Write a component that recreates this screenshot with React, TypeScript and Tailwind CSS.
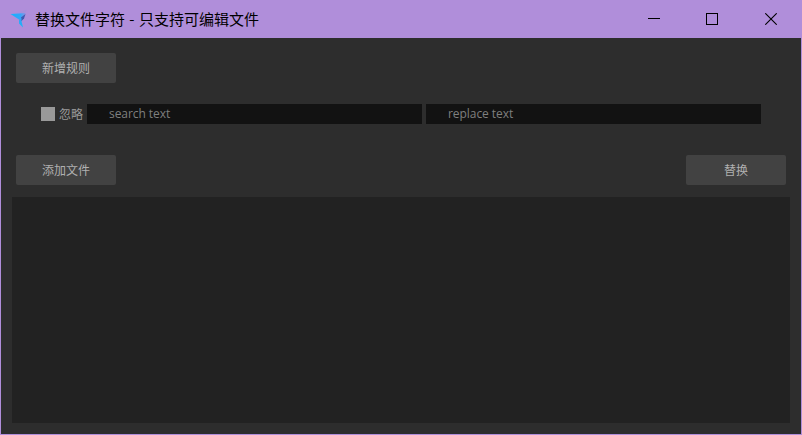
import type { ReactNode } from "react";

function Logo() {
  return (
    <svg className="block" width="18" height="20" viewBox="0 0 18 20">
      <defs>
        <linearGradient id="wing" x1="0" y1="0" x2="1" y2="0">
          <stop offset="0" stopColor="#10b4ff" />
          <stop offset="0.65" stopColor="#35a5fa" />
          <stop offset="1" stopColor="#9590e0" />
        </linearGradient>
        <linearGradient id="tail" x1="0" y1="0" x2="0" y2="1">
          <stop offset="0" stopColor="#3d9ff5" />
          <stop offset="1" stopColor="#12b8fa" />
        </linearGradient>
      </defs>
      <path d="M6 4L17 0.5L15 4Z" fill="#a78fdb" />
      <path d="M0.5 5L16 4L11 10L9 10.5Z" fill="url(#wing)" />
      <path d="M15.5 5L11 8.5L11 12.5L14 9.5Z" fill="#3f59b0" />
      <path d="M9 10.5L11.5 9L11.5 12L13 18.5L9 14.5Z" fill="url(#tail)" />
    </svg>
  );
}

function TitleBar() {
  return (
    <header className="flex h-[37px] shrink-0 items-center bg-[#b08eda] pb-[2px] pl-[9px] text-black">
      <Logo />
      <h1 className="ml-[7px] flex-1 whitespace-pre text-[15px] leading-[20px] font-normal [word-spacing:1px]">
        替换文件字符 - 只支持可编辑文件
      </h1>
      <div className="flex h-full items-center">
        <button aria-label="Minimize" className="flex w-[58px] justify-center">
          <svg width="12" height="12" shapeRendering="crispEdges"><path d="M0 5.5H12" stroke="black" /></svg>
        </button>
        <button aria-label="Maximize" className="flex w-[58px] justify-center">
          <svg width="12" height="12" shapeRendering="crispEdges"><rect x="0.5" y="0.5" width="11" height="11" fill="none" stroke="black" /></svg>
        </button>
        <button aria-label="Close" className="flex w-[60px] justify-center">
          <svg width="12" height="12"><path d="M0.3 0.3L11.7 11.7M11.7 0.3L0.3 11.7" stroke="black" strokeWidth="1.1" /></svg>
        </button>
      </div>
    </header>
  );
}

function Button({ children }: { children: ReactNode }) {
  return (
    <button className="flex h-[30px] w-[100px] items-center justify-center rounded-[2px] bg-[#424242] text-[12px] leading-[18px] text-[#b0b0b0]">
      {children}
    </button>
  );
}

function Field({ placeholder }: { placeholder: string }) {
  return (
    <input
      placeholder={placeholder}
      className="h-[20px] w-[335px] bg-[#121212] pb-[2px] pl-[22px] font-['Open_Sans','Noto_Sans',sans-serif] text-[12px] tracking-[-0.06px] text-[#999] placeholder:text-[#7f7f7f]"
    />
  );
}

export default function App() {
  return (
    <div className="flex h-[435px] w-[802px] flex-col border border-[#b08eda] bg-[#2d2d2d] font-['Noto_Sans_CJK_SC',sans-serif]">
      <TitleBar />
      <main className="flex flex-1 flex-col px-[11px] pt-[15px] pb-[11px]">
        <div className="flex px-1">
          <Button>新增规则</Button>
        </div>
        <div className="mt-[21px] flex h-[20px] items-center gap-1 pl-[29px]">
          <label className="flex items-center gap-1 text-[12px] leading-[18px] text-[#999]">
            <span className="h-[14px] w-[14px] bg-[#999]" />
            <span className="w-[24px]">忽略</span>
          </label>
          <Field placeholder="search text" />
          <Field placeholder="replace text" />
        </div>
        <div className="mt-[31px] flex justify-between pr-1 pl-1">
          <Button>添加文件</Button>
          <Button>替换</Button>
        </div>
        <section className="mt-3 w-[778px] flex-1 bg-[#222]" />
      </main>
    </div>
  );
}
